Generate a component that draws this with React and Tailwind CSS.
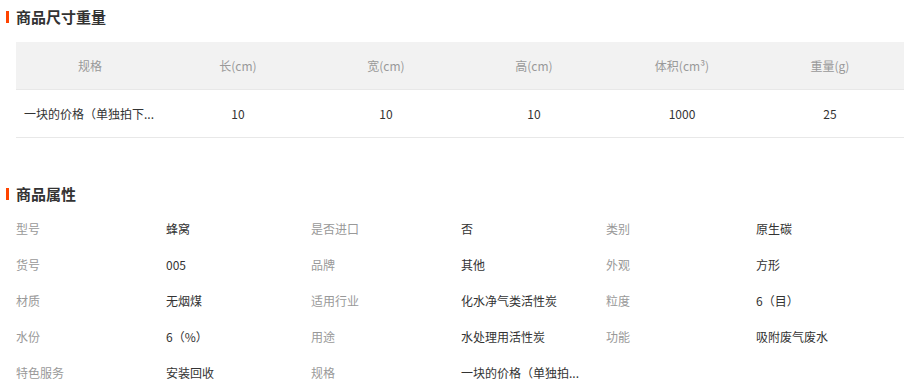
import React from "react";

const sizeHead = ["规格", "长(cm)", "宽(cm)", "高(cm)", "体积(cm³)", "重量(g)"];
const sizeRow = ["一块的价格（单独拍下...", "10", "10", "10", "1000", "25"];

const attrs = [
  ["型号", "蜂窝", "是否进口", "否", "类别", "原生碳"],
  ["货号", "005", "品牌", "其他", "外观", "方形"],
  ["材质", "无烟煤", "适用行业", "化水净气类活性炭", "粒度", "6（目）"],
  ["水份", "6（%）", "用途", "水处理用活性炭", "功能", "吸附废气废水"],
  ["特色服务", "安装回收", "规格", "一块的价格（单独拍...", "", ""],
];

const SectionTitle = ({ children }) => (
  <div className="flex items-center h-5">
    <span className="ml-[6px] w-[3px] h-[12px] bg-[#ff4400]"></span>
    <span className="ml-[7px] text-[15px] font-bold text-[#333] leading-5">{children}</span>
  </div>
);

const App = () => {
  return (
    <div
      className="w-[904px] h-[387px] overflow-hidden bg-white"
      style={{ fontFamily: '"Microsoft YaHei", "Noto Sans CJK SC", sans-serif' }}
    >
      <div className="pt-[7px]">
        <SectionTitle>商品尺寸重量</SectionTitle>
      </div>

      <div className="ml-4 mt-[15px] text-xs">
        <div className="grid grid-cols-6 h-12 bg-[#f2f2f2] border-b border-[#e8e8e8] text-[#999]">
          {sizeHead.map((h) => (
            <div key={h} className="flex items-center justify-center">
              {h}
            </div>
          ))}
        </div>
        <div className="grid grid-cols-6 h-12 border-b border-[#e8e8e8] text-[#333]">
          {sizeRow.map((v, i) =>
            i === 0 ? (
              <div key={i} className="flex items-center pl-2 whitespace-nowrap">
                {v}
              </div>
            ) : (
              <div key={i} className="flex items-center justify-center">
                {v}
              </div>
            )
          )}
        </div>
      </div>

      <div className="mt-[46px]">
        <SectionTitle>商品属性</SectionTitle>
      </div>

      <div className="mt-[7px] ml-4 text-xs">
        {attrs.map((row, r) => (
          <div key={r} className="flex h-9 items-center">
            {[0, 2, 4].map((c) => (
              <div key={c} className="flex w-[295px] whitespace-nowrap">
                <span className="w-[150px] text-[#999]">{row[c]}</span>
                <span className="text-[#333]">{row[c + 1]}</span>
              </div>
            ))}
          </div>
        ))}
      </div>
    </div>
  );
};

export default App;
